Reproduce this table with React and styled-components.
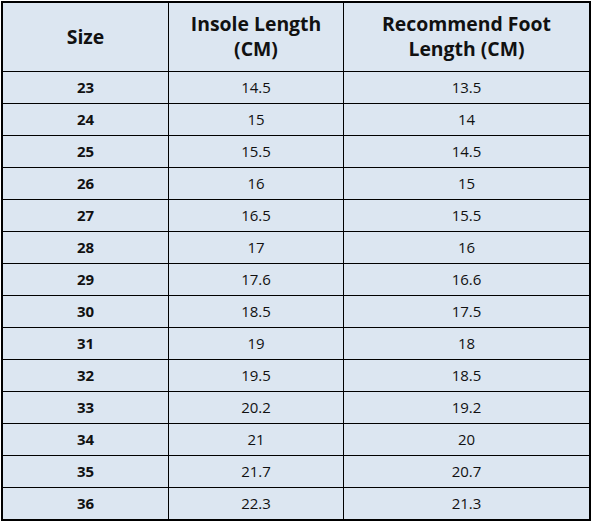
import React from "react";
import styled, { createGlobalStyle } from "styled-components";

const Global = createGlobalStyle`
  html, body { margin: 0; padding: 0; background: #ffffff; }
  body { font-family: "Open Sans", "Noto Sans", sans-serif; }
`;

const Page = styled.div`
  padding: 1px 0 0 1px;
`;

const Table = styled.div`
  display: grid;
  grid-template-columns: 165px 174px 245px;
  grid-template-rows: 68px repeat(14, 31px);
  gap: 1px;
  background: #000;
  border: 2px solid #000;
  width: max-content;
`;

const Cell = styled.div`
  background: #dce6f1;
  display: flex;
  align-items: center;
  justify-content: center;
  text-align: center;
  color: #111;
  padding-bottom: 2px;
  box-sizing: border-box;
  font-size: ${(p) => (p.$head ? "19.4px" : "15px")};
  font-weight: ${(p) => (p.$bold ? 700 : 400)};
  line-height: ${(p) => (p.$head ? "25px" : "20px")};
`;

const rows = [
  [23, "14.5", "13.5"],
  [24, "15", "14"],
  [25, "15.5", "14.5"],
  [26, "16", "15"],
  [27, "16.5", "15.5"],
  [28, "17", "16"],
  [29, "17.6", "16.6"],
  [30, "18.5", "17.5"],
  [31, "19", "18"],
  [32, "19.5", "18.5"],
  [33, "20.2", "19.2"],
  [34, "21", "20"],
  [35, "21.7", "20.7"],
  [36, "22.3", "21.3"],
];

export default function App() {
  return (
    <Page>
      <Global />
      <Table>
        <Cell $head $bold>Size</Cell>
        <Cell $head $bold>Insole Length<br />(CM)</Cell>
        <Cell $head $bold>Recommend Foot<br />Length (CM)</Cell>
        {rows.map(([s, a, b]) => (
          <React.Fragment key={s}>
            <Cell $bold>{s}</Cell>
            <Cell>{a}</Cell>
            <Cell>{b}</Cell>
          </React.Fragment>
        ))}
      </Table>
    </Page>
  );
}
